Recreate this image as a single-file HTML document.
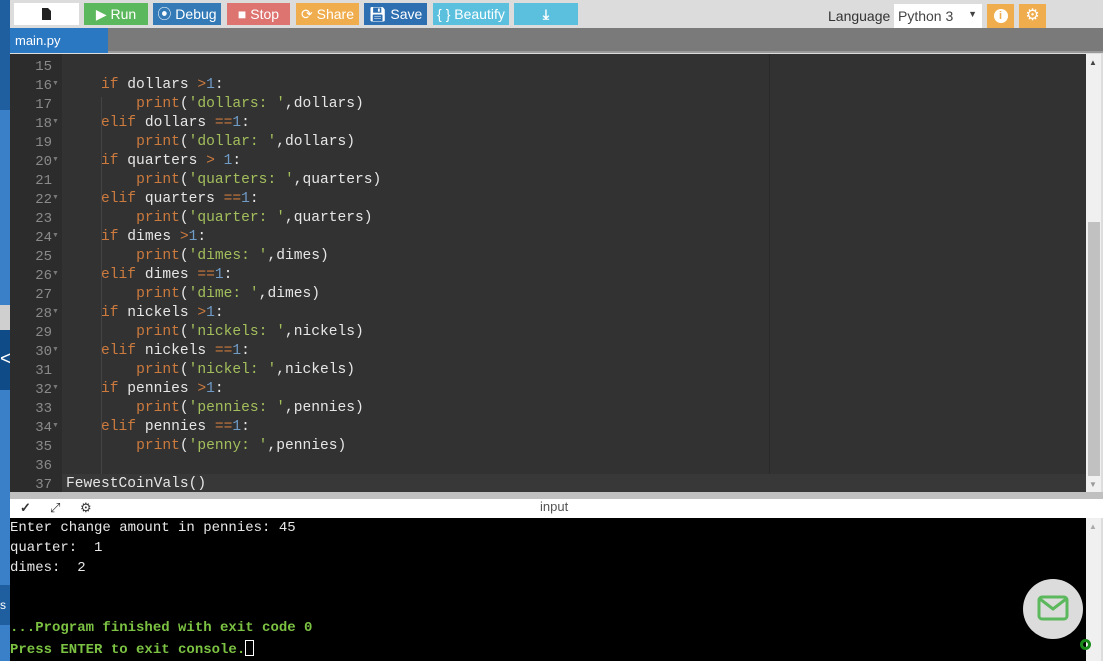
<!DOCTYPE html>
<html><head><meta charset="utf-8"><style>
*{margin:0;padding:0;box-sizing:border-box}
body{width:1103px;height:661px;overflow:hidden;background:#ddd;font-family:"Liberation Sans",sans-serif;position:relative}
.abs{position:absolute}
.btn{position:absolute;top:3px;height:22px;color:#fff;font-size:14px;line-height:22px;text-align:center}
.code{font-family:"Liberation Mono",monospace;font-size:14.6px;color:#e6e6e6;white-space:pre}
.ln{position:absolute;left:10px;width:42px;text-align:right;color:#8a8a8a;font-family:"Liberation Mono",monospace;font-size:14px}
.k{color:#cc7a3e}.s{color:#a3bf5c}.n{color:#6f9bc6}.o{color:#cc7a3e}
.con{font-family:"Liberation Mono",monospace;font-size:14px;white-space:pre;position:absolute;left:10px;color:#e8e8e8}
</style></head><body>
<div class="abs" style="left:0;top:0;width:10px;height:661px;background:#3a80c8"></div>
<div class="abs" style="left:0;top:0;width:10px;height:110px;background:#1f5f9f"></div>
<div class="abs" style="left:0;top:305px;width:10px;height:25px;background:#cfcfcf"></div>
<div class="abs" style="left:0;top:330px;width:10px;height:60px;background:#0f4b86"></div>
<div class="abs" style="left:0;top:585px;width:10px;height:40px;background:#1f5f9f"></div>
<div class="abs" style="left:0;top:348px;color:#fff;font-size:20px">&lt;</div>
<div class="abs" style="left:0;top:598px;color:#fff;font-size:12px">s</div>
<div class="abs" style="left:10px;top:0;width:1093px;height:28px;background:#dcdcdc"></div>
<div class="btn" style="left:14px;width:65px;background:#fff;color:#222"><svg width="9" height="12" viewBox="0 0 9 12" style="margin-top:5px"><path d="M0 0H6L9 3V12H0Z" fill="#222"/></svg></div>
<div class="btn" style="left:84px;width:64px;background:#5cb85c">&#9654; Run</div>
<div class="btn" style="left:153px;width:68px;background:#337ab7">&#10687; Debug</div>
<div class="btn" style="left:227px;width:63px;background:#dd7470">&#9632; Stop</div>
<div class="btn" style="left:296px;width:63px;background:#f0ad4e">&#10227; Share</div>
<div class="btn" style="left:364px;width:63px;background:#2d6fb0">&#128190;&#xFE0E; Save</div>
<div class="btn" style="left:433px;width:76px;background:#5bc0de">{ } Beautify</div>
<div class="btn" style="left:514px;width:64px;background:#5bc0de;font-weight:bold">&#10515;</div>
<div class="abs" style="left:828px;top:8px;font-size:14px;color:#333">Language</div>
<div class="abs" style="left:894px;top:4px;width:88px;height:24px;background:#fff;font-size:14px;color:#444;padding:4px 0 0 4px">Python 3<span style="position:absolute;right:5px;top:5px;font-size:9px">&#9660;</span></div>
<div class="abs" style="left:987px;top:4px;width:27px;height:24px;background:#f0ad4e"><div style="width:14px;height:14px;border-radius:50%;background:#fff;margin:5px auto;color:#f0ad4e;font-size:11px;text-align:center;font-weight:bold;line-height:14px">i</div></div>
<div class="abs" style="left:1019px;top:4px;width:27px;height:24px;background:#f0ad4e;color:#fff;text-align:center;font-size:16px;line-height:24px">&#9881;</div>
<div class="abs" style="left:10px;top:28px;width:1093px;height:25px;background:#7a7a7a;border-bottom:2px solid #9a9a9a"></div>
<div class="abs" style="left:10px;top:28px;width:98px;height:25px;background:#2b78c2;color:#fff;font-size:13px;padding:5px 0 0 5px">main.py</div>
<div class="abs" style="left:10px;top:54px;width:1076px;height:438px;background:#323232"></div>
<div class="abs" style="left:10px;top:54px;width:52px;height:438px;background:#2c2c2c"></div>
<div class="abs" style="left:62px;top:474px;width:1024px;height:18px;background:#383838"></div>
<div class="abs" style="left:769px;top:54px;width:1px;height:420px;background:#2a2a2a"></div>
<div class="abs" style="left:1086px;top:54px;width:15px;height:438px;background:#f0f0f0"></div>
<div class="abs" style="left:1088px;top:222px;width:12px;height:254px;background:#c1c1c1"></div>
<div class="abs" style="left:1089px;top:58px;font-size:8px;color:#444">&#9650;</div>
<div class="abs" style="left:1089px;top:480px;font-size:8px;color:#999">&#9660;</div>
<div id="ed"></div>
<div class="abs" style="left:10px;top:492px;width:1093px;height:7px;background:#c0c0c0"></div>
<div class="abs" style="left:10px;top:499px;width:1093px;height:19px;background:#fff"></div>
<div class="abs" style="left:540px;top:499px;font-size:13px;color:#555">input</div>
<div class="abs" style="left:20px;top:500px;font-size:13px;color:#333;font-weight:bold">&#10003;</div>
<div class="abs" style="left:50px;top:500px;font-size:13px;color:#333">&#10530;</div>
<div class="abs" style="left:80px;top:500px;font-size:13px;color:#333">&#9881;</div>
<div class="abs" style="left:10px;top:518px;width:1076px;height:143px;background:#000"></div>
<div class="abs" style="left:1086px;top:518px;width:15px;height:143px;background:#f0f0f0"></div>
<div class="abs" style="left:1089px;top:522px;font-size:8px;color:#aaa">&#9650;</div>
<div class="con" style="top:520px">Enter change amount in pennies: 45</div>
<div class="con" style="top:540px">quarter:  1</div>
<div class="con" style="top:560px">dimes:  2</div>
<div class="con" style="top:620px;color:#7cc242;font-weight:bold">...Program finished with exit code 0</div>
<div class="con" style="top:640px;color:#7cc242;font-weight:bold">Press ENTER to exit console.<span style="display:inline-block;width:9px;height:16px;border:1px solid #fff;vertical-align:-3px"></span></div>
<div class="abs" style="left:1023px;top:579px;width:60px;height:60px;border-radius:50%;background:#dcdcdc"></div>
<svg class="abs" style="left:1037px;top:595px" width="32" height="26" viewBox="0 0 32 26"><rect x="2" y="2" width="28" height="22" rx="3" fill="none" stroke="#5cb85c" stroke-width="3"/><path d="M3 4L16 14L29 4" fill="none" stroke="#5cb85c" stroke-width="3"/></svg>
<div class="abs" style="left:1080px;top:639px;width:11px;height:11px;border-radius:50%;border:3px solid #1a8a1a"></div>
<script>
var L=[
[15,'',0],[16,'    <span class=k>if</span> dollars <span class=o>&gt;</span><span class=n>1</span>:',1],
[17,'        <span class=k>print</span>(<span class=s>\'dollars: \'</span>,dollars)',0],
[18,'    <span class=k>elif</span> dollars <span class=o>==</span><span class=n>1</span>:',1],
[19,'        <span class=k>print</span>(<span class=s>\'dollar: \'</span>,dollars)',0],
[20,'    <span class=k>if</span> quarters <span class=o>&gt;</span> <span class=n>1</span>:',1],
[21,'        <span class=k>print</span>(<span class=s>\'quarters: \'</span>,quarters)',0],
[22,'    <span class=k>elif</span> quarters <span class=o>==</span><span class=n>1</span>:',1],
[23,'        <span class=k>print</span>(<span class=s>\'quarter: \'</span>,quarters)',0],
[24,'    <span class=k>if</span> dimes <span class=o>&gt;</span><span class=n>1</span>:',1],
[25,'        <span class=k>print</span>(<span class=s>\'dimes: \'</span>,dimes)',0],
[26,'    <span class=k>elif</span> dimes <span class=o>==</span><span class=n>1</span>:',1],
[27,'        <span class=k>print</span>(<span class=s>\'dime: \'</span>,dimes)',0],
[28,'    <span class=k>if</span> nickels <span class=o>&gt;</span><span class=n>1</span>:',1],
[29,'        <span class=k>print</span>(<span class=s>\'nickels: \'</span>,nickels)',0],
[30,'    <span class=k>elif</span> nickels <span class=o>==</span><span class=n>1</span>:',1],
[31,'        <span class=k>print</span>(<span class=s>\'nickel: \'</span>,nickels)',0],
[32,'    <span class=k>if</span> pennies <span class=o>&gt;</span><span class=n>1</span>:',1],
[33,'        <span class=k>print</span>(<span class=s>\'pennies: \'</span>,pennies)',0],
[34,'    <span class=k>elif</span> pennies <span class=o>==</span><span class=n>1</span>:',1],
[35,'        <span class=k>print</span>(<span class=s>\'penny: \'</span>,pennies)',0],
[36,'',0],[37,'FewestCoinVals()',0]];
var h='';
L.forEach(function(r,i){var y=59+i*19;
h+='<div class="ln" style="top:'+y+'px">'+r[0]+'</div>';
if(r[2])h+='<div class="abs" style="left:52px;top:'+(y+2)+'px;font-size:7px;color:#777">&#9660;</div>';
h+='<div class="abs code" style="left:66px;top:'+(y-1)+'px">'+r[1]+'</div>';});
h+='<div class="abs" style="left:101px;top:97px;width:1px;height:377px;background:#444"></div>';
document.getElementById('ed').innerHTML=h;
</script>
</body></html>
